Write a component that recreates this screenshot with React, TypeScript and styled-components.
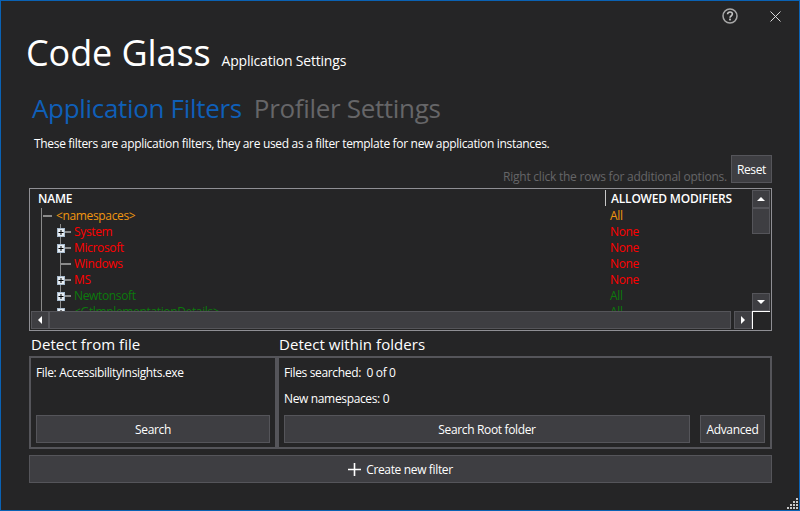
import React, { FC } from 'react'
import styled, { createGlobalStyle } from 'styled-components'

const GlobalStyle = createGlobalStyle`
  html, body {
    margin: 0;
    padding: 0;
    background: #252526;
  }
  * {
    box-sizing: border-box;
  }
`

const Window = styled.div`
  width: 800px;
  height: 511px;
  display: flex;
  flex-direction: column;
  position: relative;
  overflow: hidden;
  background: #252526;
  border: 1px solid #0a62b4;
  color: #ffffff;
  font-family: 'Open Sans', 'Noto Sans', sans-serif;
`

const CaptionBar = styled.div`
  display: flex;
  justify-content: flex-end;
  align-items: center;
  gap: 32px;
  height: 30px;
  padding: 0 18px 0 0;
`

const CaptionIcon = styled.svg`
  display: block;
`

const TitleRow = styled.div`
  display: flex;
  align-items: baseline;
  height: 45px;
  padding-left: 25px;
  gap: 11px;
`

const AppName = styled.span`
  font-size: 36px;
  line-height: 44px;
  letter-spacing: -0.1px;
`

const SubTitle = styled.span`
  font-size: 14px;
  letter-spacing: -0.2px;
`

const TabRow = styled.div`
  display: flex;
  gap: 12px;
  height: 41px;
  margin-top: 11px;
  padding-left: 31px;
  align-items: center;
`

const Tab = styled.span<{ $active?: boolean }>`
  font-size: 26px;
  letter-spacing: -0.32px;
  color: ${p => (p.$active ? '#0f5fb8' : '#666668')};
`

const Description = styled.div`
  font-size: 12px;
  line-height: 16px;
  height: 16px;
  margin-top: 8px;
  padding-left: 33px;
  letter-spacing: -0.32px;
`

const HintRow = styled.div`
  display: flex;
  justify-content: flex-end;
  align-items: center;
  gap: 4px;
  height: 28px;
  margin-top: 3px;
  padding-right: 27px;
`

const Hint = styled.span`
  font-size: 12px;
  margin-top: 14px;
  letter-spacing: -0.23px;
  color: #666668;
`

const ActionButton = styled.button<{ $width?: string; $height?: number }>`
  display: flex;
  align-items: center;
  justify-content: center;
  gap: 5px;
  width: ${p => p.$width || 'auto'};
  height: ${p => p.$height || 28}px;
  padding: 0;
  background: #3e3e42;
  border: 1px solid #55555a;
  color: #ffffff;
  font-family: inherit;
  font-size: 12px;
  letter-spacing: -0.35px;
`

const Table = styled.div`
  display: grid;
  grid-template-columns: 1fr 18px;
  grid-template-rows: 121px 18px;
  width: 743px;
  height: 143px;
  margin: 5px 0 0 28px;
  padding: 1px;
  border: 1px solid #8f8f94;
`

const TableBody = styled.div`
  overflow: hidden;
  font-size: 12px;
`

const HeaderRow = styled.div`
  display: grid;
  grid-template-columns: 574px 1fr;
  height: 18px;
  font-size: 12px;
  font-weight: 600;
  line-height: 17px;
  letter-spacing: -0.2px;
`

const HeaderCell = styled.div<{ $divided?: boolean }>`
  padding-left: ${p => (p.$divided ? '5px' : '7px')};
  height: 16px;
  border-left: ${p => (p.$divided ? '1px solid #c8c8c8' : 'none')};
`

const Row = styled.div<{ $color: string }>`
  display: grid;
  grid-template-columns: 579px 1fr;
  height: 16px;
  line-height: 16px;
  color: ${p => p.$color};
  letter-spacing: -0.35px;
`

const NameCell = styled.div`
  display: flex;
  height: 16px;
  padding-left: 10px;
`

const RootGuide = styled.div<{ $root?: boolean }>`
  flex: none;
  width: ${p => (p.$root ? 15 : 16)}px;
  height: 16px;
  background-image: linear-gradient(#8a8a8a, #8a8a8a)
    ${p => (p.$root ? ', linear-gradient(#8a8a8a, #8a8a8a)' : '')};
  background-repeat: no-repeat;
  background-size: 1px 16px ${p => (p.$root ? ', 9px 2px' : '')};
  background-position: 0 0 ${p => (p.$root ? ', 2px 7px' : '')};
`

const ChildGuide = styled.div<{ $leaf?: boolean }>`
  flex: none;
  display: flex;
  align-items: center;
  width: 17px;
  height: 16px;
  background-image: linear-gradient(#8a8a8a, #8a8a8a), linear-gradient(#8a8a8a, #8a8a8a);
  background-repeat: no-repeat;
  background-size: 1px 16px, ${p => (p.$leaf ? '10px' : '6px')} 2px;
  background-position: 3px 0, ${p => (p.$leaf ? '4px' : '8px')} 7px;
`

const Expander = styled.svg`
  display: block;
`

const ScrollTrack = styled.div<{ $horizontal?: boolean }>`
  display: flex;
  flex-direction: ${p => (p.$horizontal ? 'row' : 'column')};
  justify-content: space-between;
  overflow: hidden;
`

const ScrollButton = styled.div`
  display: flex;
  flex: none;
  align-items: center;
  justify-content: center;
  width: 18px;
  height: 18px;
  background: #3e3e42;
  border: 1px solid #55555a;
`

const ScrollThumb = styled.div<{ $horizontal?: boolean }>`
  background: #3e3e42;
  border: 1px solid #55555a;
  ${p => (p.$horizontal ? 'flex: 1; margin-right: 3px;' : 'height: 26px;')}
`

const ThumbGroup = styled.div`
  display: flex;
  flex-direction: column;
`

const HorizontalGroup = styled.div`
  display: flex;
  flex: 1;
`

const Corner = styled.div`
  border-top: 1px solid #ffffff;
  border-left: 1px solid #ffffff;
`

const DetectHeadings = styled.div`
  display: grid;
  grid-template-columns: 248px 1fr;
  height: 24px;
  margin: 1px 0 0 30px;
  font-size: 15px;
  line-height: 24px;
  letter-spacing: 0.05px;
`

const DetectPanels = styled.div`
  display: grid;
  grid-template-columns: 248px 495px;
  width: 743px;
  height: 93px;
  margin-left: 28px;
`

const Panel = styled.div`
  display: flex;
  flex-direction: column;
  height: 93px;
  padding: 7px 5px 4px;
  border: 2px solid #55555a;
  font-size: 12px;
  letter-spacing: -0.35px;
`

const PanelText = styled.div<{ $gap?: number }>`
  height: 16px;
  line-height: 16px;
  margin-bottom: ${p => p.$gap || 0}px;
`

const PanelActions = styled.div`
  display: flex;
  gap: 10px;
  margin-top: auto;
`

const Footer = styled.div`
  margin: 6px 0 0 28px;
  width: 743px;
`

const Grip = styled.svg`
  position: absolute;
  right: 1px;
  bottom: 1px;
`

const ORANGE = '#f0960f'
const RED = '#ff0000'
const GREEN = '#0c7a0c'

const rows = [
  { name: 'System', modifier: 'None', color: RED, expander: true },
  { name: 'Microsoft', modifier: 'None', color: RED, expander: true },
  { name: 'Windows', modifier: 'None', color: RED, expander: false },
  { name: 'MS', modifier: 'None', color: RED, expander: true },
  { name: 'Newtonsoft', modifier: 'All', color: GREEN, expander: true },
  { name: '<GtlmplementationDetails>', modifier: 'All', color: GREEN, expander: true },
]

const gripDots = [
  [9, 0],
  [6, 3],
  [9, 3],
  [3, 6],
  [6, 6],
  [9, 6],
  [0, 9],
  [3, 9],
  [6, 9],
  [9, 9],
]

const ExpanderIcon: FC = () => (
  <Expander width="8" height="9" viewBox="0 0 8 9">
    <rect x="0.5" y="0.5" width="7" height="8" fill="#e6ecf2" stroke="#a9bccf" />
    <path d="M1.5 4.500h5M4 2v5" stroke="#000000" strokeWidth="1" />
  </Expander>
)

const Arrow: FC<{ dir: 'up' | 'down' | 'left' | 'right' }> = ({ dir }) => {
  const points = {
    up: '0,5 4,1 8,5',
    down: '0,1 8,1 4,5',
    left: '5,0 5,8 1,4',
    right: '1,0 1,8 5,4',
  }[dir]
  const wide = dir === 'up' || dir === 'down'
  return (
    <svg width={wide ? 8 : 6} height={wide ? 6 : 8} viewBox={wide ? '0 0 8 6' : '0 0 6 8'}>
      <polygon points={points} fill="#ffffff" />
    </svg>
  )
}

const App: FC = () => {
  return (
    <Window>
      <GlobalStyle />
      <CaptionBar>
        <CaptionIcon width="16" height="16" viewBox="0 0 16 16">
          <circle cx="8" cy="8" r="7" fill="none" stroke="#a8a8a8" strokeWidth="1.5" />
          <path
            d="M5.600 6.200c0-1.400 1-2.200 2.400-2.200s2.400.8 2.400 2.100c0 1.900-2.400 1.900-2.400 3.600"
            fill="none"
            stroke="#c4c4c4"
            strokeWidth="1.6"
          />
          <rect x="7.100" y="10.600" width="1.800" height="1.800" fill="#c4c4c4" />
        </CaptionIcon>
        <CaptionIcon width="11" height="11" viewBox="0 0 11 11">
          <path d="M0.500 0.500l10 10M10.500 0.500l-10 10" stroke="#d8d8d8" strokeWidth="1" />
        </CaptionIcon>
      </CaptionBar>
      <TitleRow>
        <AppName>Code Glass</AppName>
        <SubTitle>Application Settings</SubTitle>
      </TitleRow>
      <TabRow>
        <Tab $active>Application Filters</Tab>
        <Tab>Profiler Settings</Tab>
      </TabRow>
      <Description>
        These filters are application filters, they are used as a filter template for new application instances.
      </Description>
      <HintRow>
        <Hint>Right click the rows for additional options.</Hint>
        <ActionButton $width="41px">Reset</ActionButton>
      </HintRow>
      <Table>
        <TableBody>
          <HeaderRow>
            <HeaderCell>NAME</HeaderCell>
            <HeaderCell $divided>ALLOWED MODIFIERS</HeaderCell>
          </HeaderRow>
          <Row $color={ORANGE}>
            <NameCell>
              <RootGuide $root />
              &lt;namespaces&gt;
            </NameCell>
            <div>All</div>
          </Row>
          {rows.map(row => (
            <Row $color={row.color} key={row.name}>
              <NameCell>
                <RootGuide />
                <ChildGuide $leaf={!row.expander}>{row.expander && <ExpanderIcon />}</ChildGuide>
                {row.name}
              </NameCell>
              <div>{row.modifier}</div>
            </Row>
          ))}
        </TableBody>
        <ScrollTrack>
          <ThumbGroup>
            <ScrollButton>
              <Arrow dir="up" />
            </ScrollButton>
            <ScrollThumb />
          </ThumbGroup>
          <ScrollButton>
            <Arrow dir="down" />
          </ScrollButton>
        </ScrollTrack>
        <ScrollTrack $horizontal>
          <HorizontalGroup>
            <ScrollButton>
              <Arrow dir="left" />
            </ScrollButton>
            <ScrollThumb $horizontal />
            <ScrollButton>
              <Arrow dir="right" />
            </ScrollButton>
          </HorizontalGroup>
        </ScrollTrack>
        <Corner />
      </Table>
      <DetectHeadings>
        <span>Detect from file</span>
        <span>Detect within folders</span>
      </DetectHeadings>
      <DetectPanels>
        <Panel>
          <PanelText>File: AccessibilityInsights.exe</PanelText>
          <PanelActions>
            <ActionButton $width="100%">Search</ActionButton>
          </PanelActions>
        </Panel>
        <Panel>
          <PanelText $gap={10}>Files searched:&nbsp; 0 of 0</PanelText>
          <PanelText>New namespaces: 0</PanelText>
          <PanelActions>
            <ActionButton $width="406px">Search Root folder</ActionButton>
            <ActionButton $width="65px">Advanced</ActionButton>
          </PanelActions>
        </Panel>
      </DetectPanels>
      <Footer>
        <ActionButton $width="100%">
          <svg width="13" height="13" viewBox="0 0 13 13">
            <path d="M6.500 0v13M0 6.500h13" stroke="#ffffff" strokeWidth="1.6" />
          </svg>
          Create new filter
        </ActionButton>
      </Footer>
      <Grip width="11" height="11" viewBox="0 0 11 11">
        <g fill="#c8c8c8">
          {gripDots.map(([x, y]) => (
            <rect key={`${x}-${y}`} x={x} y={y} width="2" height="2" />
          ))}
        </g>
      </Grip>
    </Window>
  )
}

export default App
